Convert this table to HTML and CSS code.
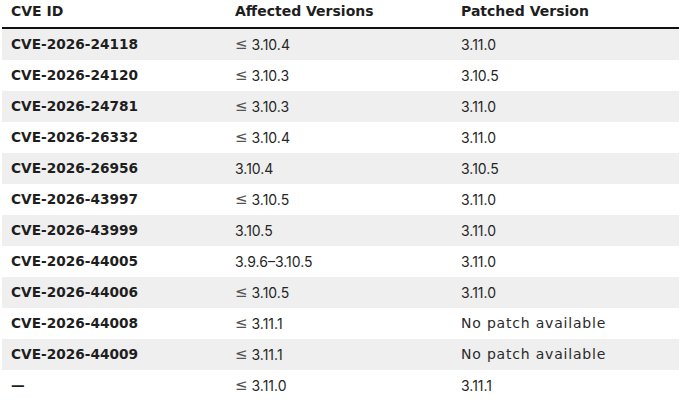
FILE: index.html
```html
<!DOCTYPE html>
<html lang="en">
<head>
<meta charset="utf-8">
<title>CVE table</title>
<link rel="stylesheet" href="styles.css">
</head>
<body>
<div class="wrap">
<table class="cve">
<colgroup><col class="c1"><col class="c2"><col class="c3"></colgroup>
<thead>
<tr><th>CVE ID</th><th>Affected Versions</th><th>Patched Version</th></tr>
</thead>
<tbody>
<tr><td class="id">CVE-2026-24118</td><td><span class="le">≤</span> 3.10.4</td><td>3.11.0</td></tr>
<tr><td class="id">CVE-2026-24120</td><td><span class="le">≤</span> 3.10.3</td><td>3.10.5</td></tr>
<tr><td class="id">CVE-2026-24781</td><td><span class="le">≤</span> 3.10.3</td><td>3.11.0</td></tr>
<tr><td class="id">CVE-2026-26332</td><td><span class="le">≤</span> 3.10.4</td><td>3.11.0</td></tr>
<tr><td class="id">CVE-2026-26956</td><td>3.10.4</td><td>3.10.5</td></tr>
<tr><td class="id">CVE-2026-43997</td><td><span class="le">≤</span> 3.10.5</td><td>3.11.0</td></tr>
<tr><td class="id">CVE-2026-43999</td><td>3.10.5</td><td>3.11.0</td></tr>
<tr><td class="id">CVE-2026-44005</td><td>3.9.6–3.10.5</td><td>3.11.0</td></tr>
<tr><td class="id">CVE-2026-44006</td><td><span class="le">≤</span> 3.10.5</td><td>3.11.0</td></tr>
<tr><td class="id">CVE-2026-44008</td><td><span class="le">≤</span> 3.11.1</td><td class="none">No patch available</td></tr>
<tr><td class="id">CVE-2026-44009</td><td><span class="le">≤</span> 3.11.1</td><td class="none">No patch available</td></tr>
<tr><td class="id">—</td><td><span class="le">≤</span> 3.11.0</td><td>3.11.1</td></tr>
</tbody>
</table>
</div>
</body>
</html>
```
FILE: styles.css
```css
html, body {
  margin: 0;
  padding: 0;
  background: #ffffff;
}

.wrap {
  padding: 0 2px;
}

.cve {
  width: 677px;
  border-collapse: collapse;
  table-layout: fixed;
  color: #222222;
}

.cve .c1 { width: 224px; }
.cve .c2 { width: 226px; }
.cve .c3 { width: 227px; }

.cve th {
  font-family: "DejaVu Sans", sans-serif;
  font-weight: 700;
  font-size: 14px;
  line-height: 17px;
  height: 17px;
  text-align: left;
  padding: 3px 8px 7px 9px;
  color: #1e1e1e;
  border-bottom: 2px solid #111111;
}

.cve td {
  font-family: "Inter", sans-serif;
  font-weight: 400;
  font-size: 14px;
  line-height: 17px;
  height: 17px;
  padding: 7px 8px 7px 9px;
  color: #262626;
  white-space: nowrap;
  overflow: hidden;
}

.cve tbody tr:nth-child(odd) td {
  background: #efefef;
}

.cve td.id {
  font-family: "DejaVu Sans", sans-serif;
  font-weight: 700;
  font-size: 13.7px;
  color: #1e1e1e;
}

.cve td.none {
  font-family: "DejaVu Sans", sans-serif;
  letter-spacing: 0.8px;
  color: #2a2a2a;
}

.le {
  display: inline-block;
  font-family: "DejaVu Sans", sans-serif;
  font-size: 15px;
  line-height: 17px;
  height: 17px;
  vertical-align: top;
  color: #555555;
}
```
